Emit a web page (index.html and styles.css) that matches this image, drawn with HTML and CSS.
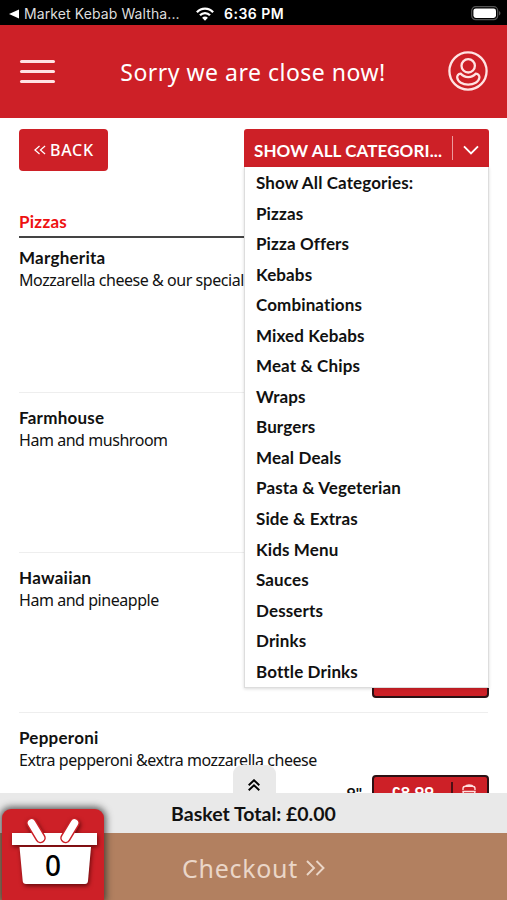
FILE: index.html
```html
<!DOCTYPE html>
<html lang="en">
<head>
    <meta charset="UTF-8">
    <meta name="viewport" content="width=device-width, initial-scale=1.0">
    <title>Market Kebab</title>
    <link rel="stylesheet" href="styles.css">
</head>
<body>

<div class="status-bar">
    <svg class="return-arrow" viewBox="0 0 10 10"><path d="M0 5L10 0.5V9.5Z" fill="#fff"/></svg>
    <span class="return-app">Market Kebab Waltha...</span>
    <svg class="wifi" viewBox="0 0 18 14" fill="none" stroke="#fff" stroke-width="2.3">
        <path d="M0.9 5.2C5.4 0.3 12.6 0.3 17.1 5.2"/>
        <path d="M4 8.3C6.8 5.3 11.2 5.3 14 8.3"/>
        <path d="M9 13.8L6.1 10.8C7.7 9.2 10.3 9.2 11.9 10.8Z" fill="#fff" stroke="none"/>
    </svg>
    <span class="time">6:36 PM</span>
    <svg class="battery" viewBox="0 0 30 15">
        <rect x="0.7" y="0.7" width="26" height="13" rx="4" fill="none" stroke="#555" stroke-width="1.2"/>
        <rect x="2.4" y="2.4" width="22.6" height="9.6" rx="2.4" fill="#fff"/>
        <path d="M28 5C30 6 30 8.5 28 9.5Z" fill="#555"/>
    </svg>
</div>

<header class="header">
    <div class="menu-icon"><span></span><span></span><span></span></div>
    <h1>Sorry we are close now!</h1>
    <svg class="user-icon" viewBox="0 0 40 40" fill="none" stroke="#ffe3e3" stroke-width="2.3">
        <circle cx="20" cy="20" r="18.6"/>
        <circle cx="20.2" cy="14.8" r="6.7"/>
        <path d="M12.6 22.6C10.3 22.8 9 24.6 9.2 26.6C9.800 30.800 14.500 33.600 20.200 33.600S30.800 30.800 31.400 26.600C31.600 24.600 30.200 22.800 27.900 22.600C24 27.300 16.500 27.300 12.600 22.600Z"/>
    </svg>
</header>

<main class="content">
    <div class="toolbar">
        <button class="back" type="button">
            <svg viewBox="0 0 13 10" fill="none" stroke="#fff" stroke-width="1.3"><path d="M6 0.7L1 5L6 9.3M12 0.7L7 5L12 9.3"/></svg>
            BACK
        </button>
        <div class="dropdown">
            <div class="selected">
                <span class="selected-text">SHOW ALL CATEGORI...</span>
                <svg viewBox="0 0 16 10" fill="none" stroke="#fff" stroke-width="1.9"><path d="M1 1.3L8 8.3L15 1.3"/></svg>
            </div>
            <ul class="options">
                <li>Show All Categories:</li>
                <li>Pizzas</li>
                <li>Pizza Offers</li>
                <li>Kebabs</li>
                <li>Combinations</li>
                <li>Mixed Kebabs</li>
                <li>Meat &amp; Chips</li>
                <li>Wraps</li>
                <li>Burgers</li>
                <li>Meal Deals</li>
                <li>Pasta &amp; Vegeterian</li>
                <li>Side &amp; Extras</li>
                <li>Kids Menu</li>
                <li>Sauces</li>
                <li>Desserts</li>
                <li>Drinks</li>
                <li>Bottle Drinks</li>
            </ul>
        </div>
    </div>

    <h2>Pizzas</h2>
    <section class="item">
        <h3>Margherita</h3>
        <p>Mozzarella cheese &amp; our special</p>
    </section>
    <section class="item">
        <h3>Farmhouse</h3>
        <p>Ham and mushroom</p>
    </section>
    <section class="item">
        <h3>Hawaiian</h3>
        <p>Ham and pineapple</p>
        <div class="prices">
            <div class="price"></div>
            <div class="price"></div>
        </div>
    </section>
    <section class="item">
        <h3>Pepperoni</h3>
        <p>Extra pepperoni &amp;extra mozzarella cheese</p>
        <div class="prices">
            <span class="size">9"</span>
            <div class="price">
                <span class="amount">£8.99</span>
                <span class="add">
                    <svg viewBox="0 0 14 14" fill="none" stroke="#ffdede" stroke-width="1.4"><path d="M1 6V4.500C1 3 2 2.200 3.500 2.200H10.500C12 2.200 13 3 13 4.500V6M3.500 2.200C3.500 0.600 10.500 0.600 10.500 2.200M1 7.500H13L12 13H2Z"/></svg>
                </span>
            </div>
        </div>
    </section>
</main>

<footer class="footer">
    <div class="expand">
        <svg viewBox="0 0 12 12" fill="none" stroke="#000" stroke-width="1.9"><path d="M0.7 6.2L6 1.2L11.3 6.2M0.7 11.3L6 6.3L11.3 11.3"/></svg>
    </div>
    <div class="total">Basket Total: £0.00</div>
    <div class="checkout">
        <span>Checkout</span>
        <svg viewBox="0 0 19 16" fill="none" stroke="#ead6c8" stroke-width="1.9"><path d="M1 1L8 8L1 15M10.5 1L17.5 8L10.5 15"/></svg>
    </div>
    <div class="basket">
        <svg class="basket-icon" viewBox="0 0 88 68">
            <path d="M1 15H86V27H1Z" fill="#fff"/>
            <path d="M8.500 29H80L77 63Q76.700 66 74 66H15Q12 66 11.700 63Z" fill="#fff"/>
            <g stroke-linecap="round">
                <path d="M20.500 5L29.500 20M63.500 5L54.500 20" stroke="#cd2027" stroke-width="10.500"/>
                <path d="M20.500 5L29.500 20M63.500 5L54.500 20" stroke="#fff" stroke-width="7.500"/>
            </g>
        </svg>
        <span class="count">0</span>
    </div>
</footer>

</body>
</html>
```
FILE: styles.css
```css
* {
    box-sizing: border-box;
}

body {
    margin: 0;
    height: 900px;
    display: flex;
    flex-direction: column;
    overflow: hidden;
    background: #fff;
    color: #111;
    font-family: Lato, sans-serif;
    font-variant-ligatures: none;
}

h1, h2, h3, p, ul {
    margin: 0;
    padding: 0;
}

svg {
    display: block;
    flex: none;
}

.status-bar {
    display: flex;
    align-items: center;
    flex: none;
    height: 25px;
    padding: 2px 6px 0 9px;
    background: #000;
    color: #fff;
    font-family: Inter, sans-serif;
    white-space: nowrap;
}

.return-arrow {
    width: 10px;
    height: 10px;
}

.return-app {
    width: 171px;
    padding-left: 5px;
    font-size: 14px;
    letter-spacing: 0.1px;
    color: #ddd;
}

.wifi {
    width: 18px;
    height: 14px;
    margin-left: 6px;
}

.time {
    margin-left: 10px;
    font-size: 14px;
    font-weight: 600;
    letter-spacing: 0.5px;
}

.battery {
    width: 30px;
    height: 15px;
    margin-left: auto;
}

.header {
    display: flex;
    align-items: center;
    justify-content: space-between;
    flex: none;
    height: 93px;
    padding: 0 19px 2px 20px;
    background: #cd2027;
}

.menu-icon {
    display: flex;
    flex-direction: column;
    gap: 7px;
    width: 35px;
    margin-top: 2px;
}

.menu-icon span {
    height: 3px;
    border-radius: 2px;
    background: #ffe3e3;
}

h1 {
    padding: 2px 0 0 3px;
    color: #fff;
    font-family: "Noto Sans", sans-serif;
    font-size: 23px;
    font-weight: 400;
    letter-spacing: 0.5px;
}

.user-icon {
    width: 40px;
    height: 40px;
}

.content {
    flex: 1;
    min-height: 0;
    padding: 11px 19px 0;
    overflow: hidden;
}

.toolbar {
    display: flex;
    justify-content: space-between;
    height: 42px;
    margin-bottom: 37px;
}

.back {
    display: flex;
    align-items: center;
    gap: 4px;
    width: 89px;
    height: 42px;
    padding: 0 0 0 15px;
    border: none;
    border-radius: 4px;
    background: #cd2027;
    color: #fff;
    font-family: "Noto Sans", sans-serif;
    font-size: 16px;
    font-weight: 500;
    letter-spacing: 0.7px;
}

.back svg {
    width: 12px;
    height: 10px;
}

.dropdown {
    position: relative;
    width: 245px;
    margin-right: -1px;
}

.selected {
    display: flex;
    align-items: center;
    height: 38px;
    padding: 5px 10px 0;
    border-radius: 3px 3px 0 0;
    background: #cd2027;
    color: #fff;
    font-size: 17px;
    font-weight: 700;
    letter-spacing: 0.1px;
    white-space: nowrap;
}

.selected-text {
    flex: 1;
}

.selected svg {
    box-sizing: content-box;
    width: 16px;
    height: 10px;
    padding: 9px 0 5px 10px;
    margin-top: -5px;
    border-left: 1px solid #ec9a9d;
}

.options {
    position: absolute;
    top: 38px;
    left: 0;
    z-index: 2;
    width: 245px;
    height: 521px;
    border: 1px solid #ddd;
    border-top: none;
    background: #fff;
    box-shadow: 0 1px 3px rgba(0, 0, 0, 0.15);
    list-style: none;
    color: #111;
    font-size: 17px;
    font-weight: 700;
    letter-spacing: 0.12px;
}

.options li {
    height: 30.56px;
    padding-left: 11px;
    line-height: 32px;
}

h2 {
    height: 30px;
    border-bottom: 2px solid #444;
    color: #ee1111;
    font-size: 17px;
    line-height: 28px;
    letter-spacing: 0.25px;
}

.item {
    height: 160px;
    padding-top: 14px;
    border-bottom: 1px solid #eee;
}

h2 + .item {
    height: 155px;
    padding-top: 9px;
}

h3 {
    font-size: 17px;
    line-height: 22px;
    letter-spacing: 0.25px;
}

.item p {
    font-family: "Noto Sans", sans-serif;
    font-size: 16px;
    line-height: 22px;
    letter-spacing: -0.45px;
    white-space: nowrap;
}

.prices {
    display: grid;
    grid-template-columns: 1fr 117px;
    gap: 9px;
    margin-right: -1px;
    padding-top: 4px;
}

.price {
    display: flex;
    align-items: center;
    grid-column: 2;
    height: 37px;
    padding-bottom: 2px;
    border: 2px solid #2b1114;
    border-radius: 4px;
    background: #cd2027;
    color: #fff;
    font-size: 17px;
    font-weight: 700;
}

.size {
    padding-right: 1px;
    text-align: right;
    font-size: 16px;
    font-weight: 700;
    line-height: 35px;
}

.amount {
    width: 77px;
    text-align: center;
}

.add {
    padding: 2px 0 6px 9px;
    border-left: 2px solid #4d1014;
}

.add svg {
    width: 14px;
    height: 14px;
}

.footer {
    position: relative;
    z-index: 3;
    flex: none;
    height: 107px;
}

.expand {
    position: absolute;
    top: -28px;
    left: 233px;
    display: flex;
    justify-content: center;
    width: 43px;
    height: 28px;
    padding: 14px 2px 0 0;
    border-radius: 9px 9px 0 0;
    background: #e9e9e9;
}

.expand svg {
    width: 12px;
    height: 12px;
}

.total {
    height: 40px;
    background: #e9e9e9;
    font-size: 19.5px;
    font-weight: 700;
    line-height: 41px;
    text-align: center;
}

.checkout {
    display: flex;
    align-items: center;
    justify-content: center;
    gap: 8px;
    height: 67px;
    padding-top: 2px;
    background: #b28060;
    color: #ead6c8;
    font-family: "Noto Sans", sans-serif;
    font-size: 25px;
    letter-spacing: 0.7px;
}

.checkout svg {
    width: 19px;
    height: 16px;
}

.basket {
    position: absolute;
    left: 2px;
    bottom: 0;
    width: 102px;
    height: 91px;
    padding: 9px 0 0 9px;
    border-radius: 9px 9px 0 0;
    background: #cd2027;
    box-shadow: 0 0 7px 2px rgba(40, 40, 40, 0.75);
}

.basket-icon {
    width: 88px;
    height: 68px;
    filter: drop-shadow(1px 2px 2px rgba(60, 0, 0, 0.7));
}

.count {
    position: absolute;
    top: 36px;
    left: 0;
    width: 102px;
    color: #000;
    font-family: "Noto Sans", sans-serif;
    font-size: 28px;
    font-weight: 500;
    line-height: 40px;
    text-align: center;
}
```
